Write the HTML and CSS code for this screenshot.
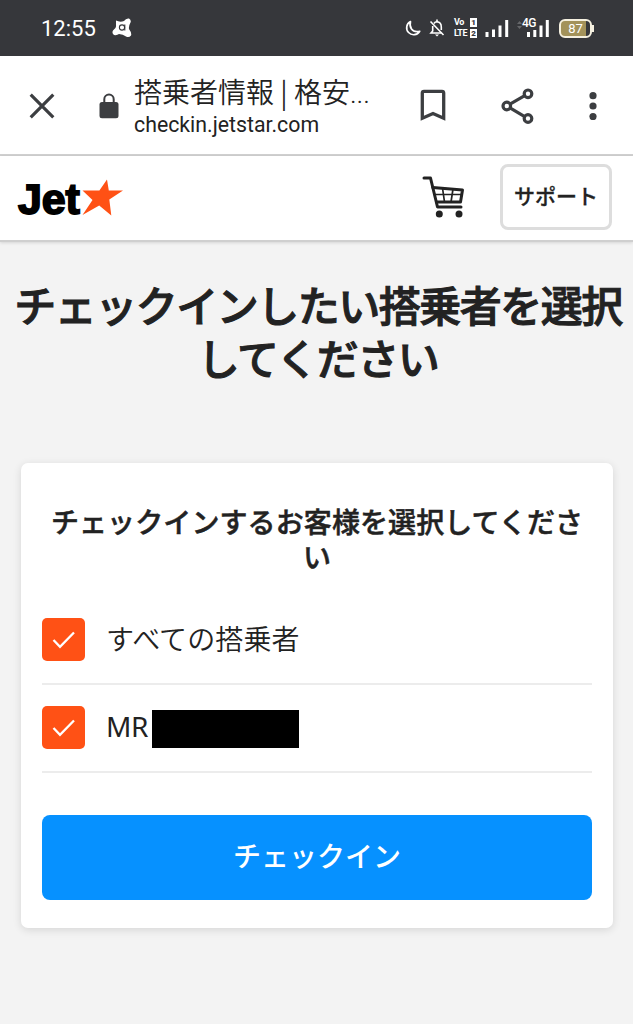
FILE: index.html
```html
<!DOCTYPE html>
<html lang="ja">

<head>
    <meta charset="UTF-8">
    <meta name="viewport" content="width=device-width, initial-scale=1.0">
    <title>搭乗者情報 | 格安航空券</title>
    <link rel="stylesheet" href="styles.css">
</head>

<body>

    <div class="status-bar">
        <span class="clock">12:55</span>
        <svg class="avast" width="20" height="20" viewBox="0 0 20 20">
            <path d="M4 2.500 Q8 4.500 12 3 Q14 0 17 .5 Q19.500 2 18.500 4.500 Q16.500 8 17 11 Q20 15 19 17.500 Q17 20 14 18.500 Q11 16 7 16 Q5 17.500 2 17 Q-.5 15 1 12.500 Q4.500 10 4 7.500 Z" fill="#fff"/>
            <circle cx="10" cy="9.500" r="2.600" fill="none" stroke="#36373b" stroke-width="1.100"/>
            <path d="M12.800 6.500V12.500" stroke="#36373b" stroke-width="1.100"/>
        </svg>
        <div class="status-icons">
            <svg class="moon" width="16" height="17" viewBox="0 0 16 17">
                <path d="M5.500 1.500 A7 7 0 1 0 14.700 11.300 Q9 12.600 6.500 9 Q4.300 5.800 5.500 1.500 Z" fill="none" stroke="#fff" stroke-width="1.700" stroke-linejoin="round"/>
            </svg>
            <svg class="bell" width="16" height="18" viewBox="0 0 16 18">
                <g fill="none" stroke="#fff" stroke-width="1.600">
                    <path d="M5 4.500 Q6 2.700 8 2.700 Q12.300 3 12.300 8 V11 M12.500 14 H2 L3.700 12 V7"/>
                    <path d="M8 .5V3 M1.500 2.500L14.500 16"/>
                </g>
                <path d="M6 15.500H10L8 17.500Z" fill="#fff"/>
            </svg>
            <div class="volte">
                <div class="volte-row"><span>Vo</span><b>1</b></div>
                <div class="volte-row"><span>LTE</span><b>2</b></div>
            </div>
            <svg class="signal" width="24" height="18" viewBox="0 0 24 18">
                <path d="M2 13V18 M8.500 10.500V18 M15 6.500V18 M21.700 1V18" stroke="#fff" stroke-width="3"/>
            </svg>
            <div class="mobile">
                <svg width="34" height="18" viewBox="0 0 34 18">
                    <path d="M1 5L3.500 2L6 5Z M1 7L3.500 10L6 7Z" fill="#66676a"/>
                    <path d="M12.500 13V18 M18.800 11V18 M25 6.500V18 M31.300 1V18" stroke="#fff" stroke-width="3"/>
                </svg>
                <span class="net">4G</span>
            </div>
            <div class="battery"><span>87</span></div>
        </div>
    </div>

    <div class="browser-bar">
        <svg class="close" width="26" height="26" viewBox="0 0 26 26">
            <path d="M1.700 1.700L24.300 24.300 M24.300 1.700L1.700 24.300" stroke="#3c3e41" stroke-width="3.200"/>
        </svg>
        <svg class="lock" width="20" height="26" viewBox="0 0 20 26">
            <rect x=".5" y="9" width="19" height="16.300" rx="2.500" fill="#3c3e41"/>
            <path d="M5.300 10V6.300A4.700 4.700 0 0 1 14.700 6.300V10" fill="none" stroke="#3c3e41" stroke-width="2"/>
        </svg>
        <div class="page-info">
            <div class="page-title">搭乗者情報 | 格安<span class="dots">...</span></div>
            <div class="page-url">checkin.jetstar.com</div>
        </div>
        <svg class="bookmark" width="26" height="33" viewBox="0 0 26 33">
            <path d="M2.300 29.200V4Q2.300 2.300 4 2.300H22Q23.700 2.300 23.700 4V29.200L13 24.500Z" fill="none" stroke="#3c3e41" stroke-width="3.300"/>
        </svg>
        <svg class="share" width="34" height="36" viewBox="0 0 34 36">
            <g fill="none" stroke="#3c3e41" stroke-width="3.200">
                <circle cx="5.800" cy="18" r="3.800"/>
                <circle cx="27" cy="5.800" r="3.800"/>
                <circle cx="27" cy="30.500" r="3.800"/>
                <path d="M9 16.200L23.700 7.700 M9 19.900L23.700 28.600"/>
            </g>
        </svg>
        <svg class="more" width="8" height="28" viewBox="0 0 8 28">
            <g fill="#3c3e41">
                <circle cx="4" cy="3.700" r="3.600"/>
                <circle cx="4" cy="14" r="3.600"/>
                <circle cx="4" cy="24.600" r="3.600"/>
            </g>
        </svg>
    </div>

    <header class="header">
        <div class="logo">
            <span class="logo-text">Jet</span>
            <svg class="logo-star" width="41" height="37" viewBox="0 0 41 37">
                <path d="M25 .5L26.800 11.500H41L27.300 20.500L29.300 36.500L17.200 26.500L.5 36L10.500 21L.5 11.500H17.400Z" fill="#ff5115"/>
            </svg>
        </div>
        <svg class="cart" width="44" height="42" viewBox="0 0 44 42">
            <g fill="none" stroke="#222" stroke-linejoin="round" stroke-linecap="round">
                <path d="M2 2H8.500L15.500 31H39" stroke-width="3"/>
                <path d="M10.800 11.500L40.500 14L38.500 26H14.500" stroke-width="3"/>
                <path d="M12.500 18.500H39.500 M20.500 12L22.500 26 M31 13L29 26" stroke-width="1.700"/>
            </g>
            <circle cx="17.300" cy="38" r="3.500" fill="#222"/>
            <circle cx="37" cy="38" r="3.500" fill="#222"/>
        </svg>
        <button class="support">サポート</button>
    </header>

    <main>
        <h1>チェックインしたい搭乗者を選択してください</h1>

        <div class="card">
            <h2>チェックインするお客様を選択してください</h2>
            <div class="passenger">
                <span class="checkbox">
                    <svg width="24" height="20" viewBox="0 0 24 20">
                        <path d="M1.500 10L8 16.800L22 2.500" fill="none" stroke="#fff" stroke-width="2.300"/>
                    </svg>
                </span>
                <span class="name">すべての搭乗者</span>
            </div>
            <div class="passenger">
                <span class="checkbox">
                    <svg width="24" height="20" viewBox="0 0 24 20">
                        <path d="M1.500 10L8 16.800L22 2.500" fill="none" stroke="#fff" stroke-width="2.300"/>
                    </svg>
                </span>
                <span class="name latin">MR</span>
                <span class="masked"></span>
            </div>
            <button class="checkin">チェックイン</button>
        </div>
    </main>

</body>

</html>
```
FILE: styles.css
```css
* {
    box-sizing: border-box;
}

body {
    margin: 0;
    height: 1024px;
    overflow: hidden;
    background-color: #f3f3f3;
    color: #222;
    font-family: "Noto Sans CJK JP", sans-serif;
}

svg {
    display: block;
    flex: none;
}

.status-bar {
    display: flex;
    align-items: center;
    height: 56px;
    padding: 0 39px 0 41px;
    background-color: #36373b;
    color: #fff;
}

.clock {
    width: 71px;
    font-family: Roboto, sans-serif;
    font-size: 22px;
}

.status-icons {
    display: flex;
    align-items: center;
    margin-left: auto;
}

.moon {
    margin-right: 8px;
}

.volte {
    width: 23px;
    margin-left: 9px;
    font-family: Roboto, sans-serif;
    font-size: 9px;
    font-weight: 700;
}

.volte-row {
    display: flex;
    justify-content: space-between;
    height: 9px;
    line-height: 9px;
}

.volte-row + .volte-row {
    margin-top: 2px;
}

.volte-row span {
    width: 15px;
    letter-spacing: -0.5px;
}

.volte-row b {
    width: 7px;
    height: 9px;
    background-color: #fff;
    color: #36373b;
    font-size: 8px;
    line-height: 9px;
    text-align: center;
}

.signal {
    margin-left: 8px;
}

.mobile {
    position: relative;
    margin-left: 7px;
}

.net {
    position: absolute;
    left: 6px;
    top: -1px;
    padding-right: 1px;
    background-color: #36373b;
    font-family: Roboto, sans-serif;
    font-size: 12px;
    font-weight: 500;
    line-height: 11px;
    letter-spacing: -0.5px;
}

.battery {
    position: relative;
    width: 33px;
    height: 19px;
    margin: 0 2px 0 9px;
    border: 2px solid #f5f0e0;
    border-radius: 6px;
    background: linear-gradient(to right, #a3925a 25px, #36373b 25px);
    font-family: Roboto, sans-serif;
    font-size: 13px;
    line-height: 15px;
    text-align: center;
}

.battery::after {
    content: "";
    position: absolute;
    right: -4px;
    top: 4px;
    width: 2px;
    height: 7px;
    background-color: #f5f0e0;
}

.browser-bar {
    display: flex;
    align-items: center;
    height: 100px;
    padding: 1px 36px 0 29px;
    border-bottom: 2px solid #d0d0d0;
    background-color: #fff;
}

.lock {
    margin-left: 44px;
}

.page-info {
    width: 240px;
    margin-left: 15px;
    padding-top: 2px;
    white-space: nowrap;
}

.page-title {
    height: 36px;
    font-size: 28px;
    font-weight: 350;
    line-height: 36px;
}

.dots {
    font-family: Roboto, sans-serif;
}

.page-url {
    font-family: Roboto, sans-serif;
    font-size: 21.3px;
    line-height: 32px;
}

.bookmark {
    margin-left: 46px;
}

.share {
    margin-left: 55px;
}

.more {
    margin-left: auto;
}

.header {
    display: flex;
    align-items: center;
    height: 86px;
    padding: 0 21px 2px 17px;
    border-bottom: 2px solid #cfcfcf;
    background-color: #fff;
    box-shadow: 0 1px 3px rgba(0, 0, 0, 0.12);
}

.logo {
    display: flex;
    align-items: center;
}

.logo-text {
    width: 65px;
    padding: 3px 0 0 1px;
    color: #000;
    font-family: "Liberation Sans", sans-serif;
    font-size: 43px;
    font-weight: 700;
    letter-spacing: -0.2px;
    line-height: 42px;
    -webkit-text-stroke: 1.8px #000;
}

.logo-star {
    margin-top: 1px;
}

.cart {
    margin-left: auto;
    margin-right: 34px;
}

.support {
    width: 112px;
    height: 66px;
    padding: 0 0 5px;
    border: 3px solid #ddd;
    border-radius: 8px;
    background-color: #fff;
    color: #222;
    font-family: inherit;
    font-size: 21px;
    font-weight: 500;
    -webkit-text-stroke: 0.3px #222;
}

h1 {
    margin: 0;
    padding: 35px 7px 0 10px;
    font-size: 42px;
    font-weight: 500;
    letter-spacing: -1.5px;
    line-height: 53px;
    text-align: center;
    -webkit-text-stroke: 1px #222;
}

.card {
    width: 592px;
    height: 465px;
    margin: 80px 0 0 21px;
    padding: 41px 21px 0;
    border-radius: 7px;
    background-color: #fff;
    box-shadow: 0 2px 8px rgba(0, 0, 0, 0.12);
}

h2 {
    margin: 0 0 23px;
    font-size: 28px;
    font-weight: 500;
    letter-spacing: 0.1px;
    line-height: 35px;
    text-align: center;
    -webkit-text-stroke: 0.5px #222;
}

.passenger {
    display: flex;
    align-items: center;
    height: 88px;
    padding-bottom: 1px;
    border-bottom: 2px solid #ececec;
}

.checkbox {
    display: flex;
    align-items: center;
    justify-content: center;
    width: 43px;
    height: 43px;
    border-radius: 5px;
    background-color: #ff5115;
}

.name {
    margin-left: 21px;
    padding-bottom: 4px;
    font-size: 28px;
    font-weight: 350;
    letter-spacing: 0.1px;
}

.latin {
    width: 46px;
    font-family: "Noto Sans", sans-serif;
    font-weight: 400;
    letter-spacing: -0.5px;
}

.masked {
    width: 147px;
    height: 38px;
    margin-top: 2px;
    background-color: #000;
}

.checkin {
    display: block;
    width: 100%;
    height: 85px;
    margin-top: 42px;
    padding: 0 0 6px;
    border: none;
    border-radius: 8px;
    background-color: #0691ff;
    color: #fff;
    font-family: inherit;
    font-size: 28px;
    font-weight: 500;
}
```
